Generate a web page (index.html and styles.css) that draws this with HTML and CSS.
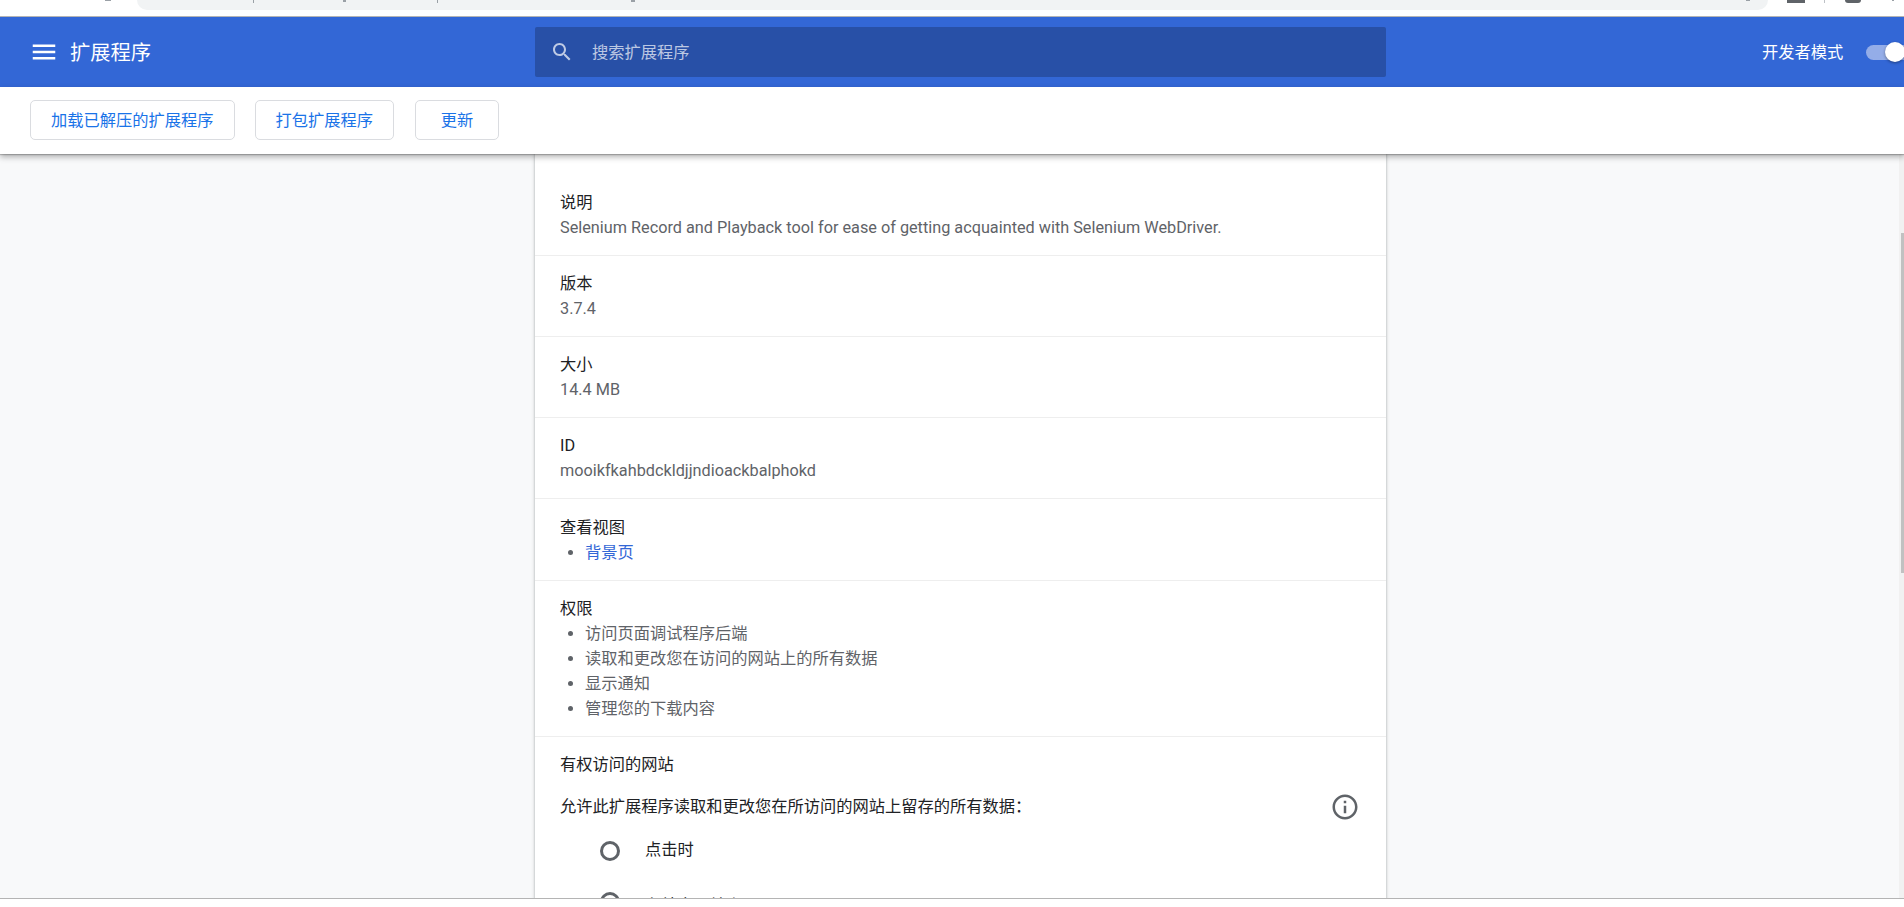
FILE: index.html
```html
<!DOCTYPE html>
<html lang="zh-CN">
<head>
    <meta charset="UTF-8">
    <meta name="viewport" content="width=device-width, initial-scale=1.0">
    <title>扩展程序</title>
    <link rel="stylesheet" href="styles.css">
</head>
<body>
    <!-- 浏览器地址栏的下边缘 -->
    <div class="browser-strip">
        <div class="address-bar"></div>
        <i class="frag frag-back"></i>
        <i class="frag frag-url-1"></i>
        <i class="frag frag-url-2"></i>
        <i class="frag frag-url-3"></i>
        <i class="frag frag-url-4"></i>
        <i class="frag frag-star"></i>
        <i class="frag frag-ext"></i>
        <i class="frag frag-sep"></i>
        <i class="frag frag-avatar"></i>
        <i class="frag frag-more"></i>
    </div>

    <div class="header">
        <div class="header-left">
            <svg class="menu-icon" viewBox="0 0 24 24"><path d="M3 18h18v-2H3v2zm0-5h18v-2H3v2zm0-7v2h18V6H3z"/></svg>
            <h1>扩展程序</h1>
        </div>
        <div class="search">
            <svg class="search-icon" viewBox="0 0 24 24" width="24" height="24"><path d="M15.5 14h-.79l-.28-.27C15.41 12.59 16 11.11 16 9.5 16 5.91 13.09 3 9.5 3S3 5.91 3 9.5 5.91 16 9.5 16c1.61 0 3.09-.59 4.23-1.57l.27.28v.79l5 4.99L20.49 19l-4.99-5zm-6 0C7.01 14 5 11.99 5 9.5S7.01 5 9.5 5 14 7.01 14 9.5 11.99 14 9.5 14z"/></svg>
            <span>搜索扩展程序</span>
        </div>
        <div class="dev-mode">
            <span>开发者模式</span>
            <div class="toggle"><div class="toggle-knob"></div></div>
        </div>
    </div>

    <div class="toolbar">
        <button>加载已解压的扩展程序</button>
        <button>打包扩展程序</button>
        <button class="update-btn">更新</button>
    </div>

    <div class="main">
        <div class="card">
            <div class="section first">
                <div class="label">说明</div>
                <div class="value">Selenium Record and Playback tool for ease of getting acquainted with Selenium WebDriver.</div>
            </div>
            <div class="section">
                <div class="label">版本</div>
                <div class="value">3.7.4</div>
            </div>
            <div class="section">
                <div class="label">大小</div>
                <div class="value">14.4 MB</div>
            </div>
            <div class="section">
                <div class="label">ID</div>
                <div class="value">mooikfkahbdckldjjndioackbalphokd</div>
            </div>
            <div class="section views">
                <div class="label">查看视图</div>
                <ul>
                    <li><a href="#">背景页</a></li>
                </ul>
            </div>
            <div class="section permissions">
                <div class="label">权限</div>
                <ul>
                    <li>访问页面调试程序后端</li>
                    <li>读取和更改您在访问的网站上的所有数据</li>
                    <li>显示通知</li>
                    <li>管理您的下载内容</li>
                </ul>
            </div>
            <div class="section sites">
                <div class="label">有权访问的网站</div>
                <div class="sites-row">
                    <span>允许此扩展程序读取和更改您在所访问的网站上留存的所有数据：</span>
                    <svg class="info-icon" viewBox="0 0 24 24" width="30" height="30"><path d="M11 7h2v2h-2zm0 4h2v6h-2zm1-9C6.48 2 2 6.48 2 12s4.48 10 10 10 10-4.48 10-10S17.52 2 12 2zm0 18c-4.41 0-8-3.59-8-8s3.59-8 8-8 8 3.59 8 8-3.59 8-8 8z"/></svg>
                </div>
                <div class="radio-row"><div class="radio"></div><span>点击时</span></div>
                <div class="radio-row second"><div class="radio"></div><span>在特定网站上</span></div>
            </div>
        </div>
        <div class="scrollbar"><div class="scroll-thumb"></div></div>
    </div>

    <div class="bottom-strip"></div>
</body>
</html>
```

FILE: styles.css
```css
* {
    box-sizing: border-box;
}
body {
    font-family: Roboto, "Noto Sans CJK SC", sans-serif;
    background-color: #f8f9fa;
    margin: 0;
    padding: 0;
    color: #202124;
    font-size: 16.25px;
    height: 907px;
    overflow: hidden;
    display: flex;
    flex-direction: column;
}

/* browser chrome, only the bottom pixels show */
.browser-strip {
    position: relative;
    height: 17px;
    flex: none;
    background-color: white;
    border-bottom: 1px solid #b4b4b4;
    padding-left: 137px;
    padding-right: 136px;
}
.address-bar {
    height: 10px;
    background-color: #f1f3f4;
    border-radius: 0 0 14px 14px;
}
.frag {
    position: absolute;
    top: 0;
    width: 1px;
    height: 3px;
    background-color: #9aa0a6;
}
.frag-back { left: 105px; width: 6px; height: 1px; }
.frag-url-1 { left: 253px; }
.frag-url-2 { left: 343px; width: 3px; height: 2px; }
.frag-url-3 { left: 437px; }
.frag-url-4 { left: 631px; width: 4px; height: 2px; }
.frag-star { left: 1746px; width: 4px; height: 1px; }
.frag-ext { left: 1787px; width: 18px; background-color: #5f6368; }
.frag-sep { left: 1824px; background-color: #bdc1c6; }
.frag-avatar {
    left: 1845px;
    width: 16px;
    height: 3px;
    border-radius: 0 0 8px 8px;
    background-color: #5f6368;
}
.frag-more { left: 1892px; width: 2px; height: 1px; }

.header {
    height: 70px;
    flex: none;
    background-color: #3367d6;
    color: white;
    display: flex;
    align-items: center;
    position: relative;
    z-index: 2;
}
.header-left {
    display: flex;
    align-items: center;
    width: 535px;
    flex: none;
    padding-left: 29px;
}
.menu-icon {
    fill: white;
    width: 30px;
    height: 30px;
}
h1 {
    font-size: 20.3px;
    font-weight: 400;
    margin: 0 0 2px 11px;
}
.search {
    width: 851px;
    height: 50px;
    flex: none;
    background-color: #2850a7;
    border-radius: 2px;
    display: flex;
    align-items: center;
    padding-left: 15px;
    color: rgba(255, 255, 255, 0.7);
}
.search span {
    margin-bottom: 2px;
}
.search-icon {
    fill: rgba(255, 255, 255, 0.7);
    margin-right: 18px;
}
.dev-mode {
    display: flex;
    align-items: center;
    margin-left: auto;
    overflow: hidden;
    width: 142px;
    height: 40px;
    flex: none;
    white-space: nowrap;
}
.dev-mode span {
    flex: none;
    margin-bottom: 2px;
}
.toggle {
    position: relative;
    width: 38px;
    height: 15px;
    margin-left: 23px;
    flex: none;
    background-color: #94ade8;
    border-radius: 8px 0 0 8px;
}
.toggle-knob {
    position: absolute;
    left: 19px;
    top: -3px;
    width: 20px;
    height: 20px;
    border-radius: 50%;
    background-color: white;
    box-shadow: 0 1px 3px rgba(0, 0, 0, 0.4);
}
.toolbar {
    height: 67px;
    flex: none;
    background-color: white;
    display: flex;
    align-items: center;
    gap: 20px;
    padding: 0 30px 1px;
    box-shadow: 0 1px 1px rgba(0, 0, 0, 0.2), 0 3px 6px rgba(0, 0, 0, 0.3);
    position: relative;
    z-index: 2;
}
.toolbar button {
    background-color: white;
    border: 1px solid #dadce0;
    border-radius: 5px;
    color: #1a73e8;
    height: 40px;
    padding: 0 20px 3px;
    font-family: inherit;
    font-size: 16.25px;
    font-weight: 400;
}
.toolbar .update-btn {
    width: 84px;
    padding: 0 0 3px;
    margin-left: 1px;
}
.main {
    flex: 1;
    min-height: 0;
    overflow: hidden;
    padding-left: 535px;
    position: relative;
}
.card {
    width: 851px;
    background-color: white;
    box-shadow: 0 0 2px rgba(60, 64, 67, 0.3), 0 1px 3px 1px rgba(60, 64, 67, 0.15);
    height: 760px;
}
.section {
    padding: 15px 25px 0;
    height: 81px;
    border-bottom: 1px solid #eeeeee;
    line-height: 25px;
}
.section.first {
    height: 102px;
    padding-top: 36px;
}
.section.views {
    height: 82px;
    padding-top: 16px;
}
.section.permissions {
    height: 156px;
}
.value {
    color: #5f6368;
}
ul {
    margin: 0;
    padding-left: 25px;
    color: #5f6368;
}
a {
    color: #3367d6;
    text-decoration: none;
}
.sites {
    border-bottom: none;
}
.sites-row {
    display: flex;
    justify-content: space-between;
    margin-top: 15px;
    height: 30px;
}
.sites-row span {
    margin-top: 2px;
}
.info-icon {
    fill: #5f6368;
    margin-right: 1px;
}
.radio-row {
    display: flex;
    align-items: center;
    margin-top: 15px;
    padding-left: 40px;
}
.radio-row span {
    margin-bottom: 2px;
}
.radio-row.second {
    align-items: flex-start;
    margin-top: 28px;
}
.radio-row.second span {
    margin-top: 1px;
    margin-bottom: 0;
}
.radio {
    width: 20px;
    height: 20px;
    border: 3px solid #5f6368;
    border-radius: 50%;
    margin-right: 25px;
}
.scrollbar {
    position: absolute;
    top: 0;
    right: 0;
    bottom: 0;
    width: 5px;
    background-color: #f1f1f1;
}
.scroll-thumb {
    position: absolute;
    top: 79px;
    left: 2px;
    right: 0;
    height: 340px;
    background-color: #c1c1c1;
}
.bottom-strip {
    height: 9px;
    flex: none;
    background-color: white;
    border-top: 1px solid #b4b4b4;
    position: relative;
    z-index: 2;
}
```
